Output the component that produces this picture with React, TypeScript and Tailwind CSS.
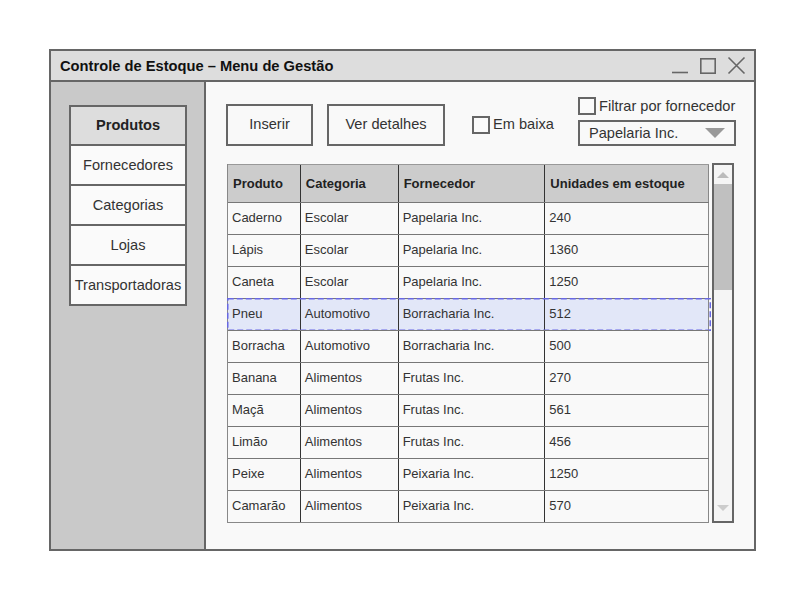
import React from "react";

const rows = [
  ["Caderno", "Escolar", "Papelaria Inc.", "240"],
  ["Lápis", "Escolar", "Papelaria Inc.", "1360"],
  ["Caneta", "Escolar", "Papelaria Inc.", "1250"],
  ["Pneu", "Automotivo", "Borracharia Inc.", "512"],
  ["Borracha", "Automotivo", "Borracharia Inc.", "500"],
  ["Banana", "Alimentos", "Frutas Inc.", "270"],
  ["Maçã", "Alimentos", "Frutas Inc.", "561"],
  ["Limão", "Alimentos", "Frutas Inc.", "456"],
  ["Peixe", "Alimentos", "Peixaria Inc.", "1250"],
  ["Camarão", "Alimentos", "Peixaria Inc.", "570"],
];

const cols = ["w-[73px]", "w-[98px]", "w-[147px]", "w-[164px]"];

export default function App() {
  return (
    <div className="w-[800px] h-[600px] bg-white pt-[49px] pl-[49px] text-[#333]" style={{ fontFamily: '"Liberation Sans", Arial, sans-serif' }}>
      <div className="w-[707px] h-[502px] border-2 border-[#666] flex flex-col">
        {/* title bar */}
        <div className="h-[31px] shrink-0 bg-[#dddddd] border-b-2 border-[#666] flex items-center pl-[9px] pr-[8px]">
          <span className="text-[14.7px] font-bold text-[#111] pt-[1px]">Controle de Estoque – Menu de Gestão</span>
          <div className="ml-auto flex items-center gap-[10px]">
            <svg width="18" height="18" viewBox="0 0 18 18">
              <line x1="1" y1="15.5" x2="17" y2="15.5" stroke="#666" strokeWidth="1.6" />
            </svg>
            <svg width="18" height="18" viewBox="0 0 18 18">
              <rect x="1.8" y="1.8" width="14.4" height="14.4" fill="none" stroke="#666" strokeWidth="1.6" />
            </svg>
            <svg width="19" height="19" viewBox="0 0 19 19">
              <path d="M1.5 1.5 L17.5 17.5 M17.5 1.5 L1.5 17.5" stroke="#666" strokeWidth="1.6" />
            </svg>
          </div>
        </div>
        {/* body */}
        <div className="flex flex-1 min-h-0">
          <div className="w-[155px] shrink-0 bg-[#c9c9c9] border-r-2 border-[#666] pl-[18px] pt-[23px]">
            <div className="w-[118px] border-2 border-[#666] bg-[#fafafa] text-[14.6px]">
              <div className="h-[37px] bg-[#dddddd] flex items-center justify-center font-bold text-[#222]">Produtos</div>
              {["Fornecedores", "Categorias", "Lojas", "Transportadoras"].map((t) => (
                <div key={t} className="h-[40px] border-t-2 border-[#666] flex items-center justify-center pt-[1px]">{t}</div>
              ))}
            </div>
          </div>
          <div className="flex-1 bg-[#f9f9f9] pl-[20px] pr-[18px] pt-[15px]">
            {/* toolbar */}
            <div className="flex items-start">
              <div className="flex items-center mt-[7px]">
                <div className="w-[87px] h-[42px] border-2 border-[#666] flex items-center justify-center text-[14.6px]">Inserir</div>
                <div className="ml-[14px] w-[118px] h-[42px] border-2 border-[#666] flex items-center justify-center text-[14.6px]">Ver detalhes</div>
                <div className="ml-[27px] flex items-center">
                  <div className="w-[18px] h-[18px] border-2 border-[#666] bg-[#fafafa]" />
                  <span className="ml-[3px] text-[14.6px]">Em baixa</span>
                </div>
              </div>
              <div className="ml-auto flex flex-col w-[158px]">
                <div className="flex items-center h-[18px]">
                  <div className="w-[18px] h-[18px] border-2 border-[#666] bg-[#fafafa]" />
                  <span className="ml-[3px] text-[14.6px] whitespace-nowrap pt-[1px]">Filtrar por fornecedor</span>
                </div>
                <div className="mt-[5px] h-[26px] border-2 border-[#666] flex items-center pl-[9px] pr-[9px] text-[14.6px]">
                  <span className="pt-[2px]">Papelaria Inc.</span>
                  <svg className="ml-auto" width="20" height="10" viewBox="0 0 20 10">
                    <polygon points="0,0 20,0 10,10" fill="#999" />
                  </svg>
                </div>
              </div>
            </div>
            {/* table */}
            <div className="flex mt-[18px]">
              <div className="ml-[1px] w-[482px] border-l border-b border-[#888] text-[13px]">
                <div className="flex h-[38px] bg-[#cccccc] font-bold text-[#222] border-t border-[#999]">
                  {["Produto", "Categoria", "Fornecedor", "Unidades em estoque"].map((h, i) => (
                    <div key={h} className={`${cols[i]} ${i < 3 ? "border-r border-[#333]" : "border-r border-[#888]"} flex items-center pl-[5px] pt-[1px]`}>{h}</div>
                  ))}
                </div>
                {rows.map((r, ri) => {
                  const sel = ri === 3;
                  return (
                    <div key={ri} className={`relative flex h-[32px] border-t border-[#777] ${sel ? "bg-[#e2e7f8]" : "bg-[#f9f9f9]"}`}>
                      {r.map((c, i) => (
                        <div key={i} className={`${cols[i]} ${i < 3 ? "border-r border-[#333]" : "border-r border-[#888]"} flex items-center pl-[4px] pb-[1px]`}>{c}</div>
                      ))}
                      {sel && (
                        <svg className="absolute left-[-1px] top-[-1px]" width="484" height="33" viewBox="0 0 484 33">
                          <rect x="0.75" y="0.75" width="482.5" height="31.5" fill="none" stroke="#6868e4" strokeWidth="1.5" strokeDasharray="6 3" />
                        </svg>
                      )}
                    </div>
                  );
                })}
              </div>
              <div className="ml-[3px] -mt-[1px] w-[22px] h-[360px] border-2 border-[#666] bg-[#f5f5f5] flex flex-col">
                <div className="h-[19px] flex items-center justify-center">
                  <svg width="12" height="6" viewBox="0 0 12 6"><polygon points="0,6 12,6 6,0" fill="#bbb" /></svg>
                </div>
                <div className="h-[106px] bg-[#c0c0c0]" />
                <div className="flex-1" />
                <div className="h-[16px] flex items-start justify-center">
                  <svg width="12" height="6" viewBox="0 0 12 6"><polygon points="0,0 12,0 6,6" fill="#ccc" /></svg>
                </div>
              </div>
            </div>
          </div>
        </div>
      </div>
    </div>
  );
}
